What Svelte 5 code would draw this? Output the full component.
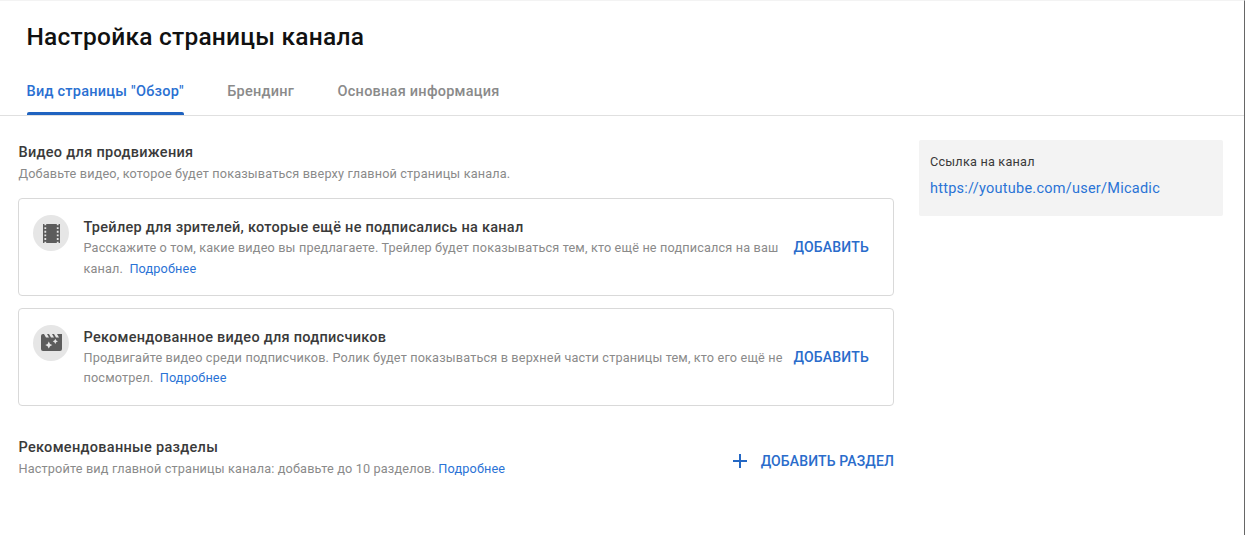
<script>
  const cards = [
    { icon: 'film', title: 'Трейлер для зрителей, которые ещё не подписались на канал', lines: ['Расскажите о том, какие видео вы предлагаете. Трейлер будет показываться тем, кто ещё не подписался на ваш', 'канал.'] },
    { icon: 'clap', title: 'Рекомендованное видео для подписчиков', lines: ['Продвигайте видео среди подписчиков. Ролик будет показываться в верхней части страницы тем, кто его ещё не', 'посмотрел.'] }
  ];
</script>

<div class="page">
  <h1>Настройка страницы канала</h1>
  <nav>
    <button class="tab active">Вид страницы "Обзор"</button>
    <button class="tab">Брендинг</button>
    <button class="tab">Основная информация</button>
  </nav>
  <div class="body">
    <main>
      <h2>Видео для продвижения</h2>
      <p class="sub first">Добавьте видео, которое будет показываться вверху главной страницы канала.</p>
      {#each cards as c}
        <section class="card">
          <span class="disc">
            {#if c.icon === 'film'}
              <svg width="17" height="19" viewBox="0 0 17 19"><path fill-rule="evenodd" d="M0 0h1.400v1.300h1.800V0h10.600v1.300h1.800V0H17v19h-1.400v-1.300h-1.800V19H3.200v-1.300H1.400V19H0zM1.400 3.200v1.900h1.800V3.200zM1.400 6.800v1.900h1.800V6.800zM1.400 10.400v1.900h1.800v-1.900zM1.400 14v1.900h1.800V14zM13.800 3.200v1.900h1.800V3.200zM13.800 6.800v1.900h1.800V6.800zM13.800 10.400v1.900h1.800v-1.900zM13.800 14v1.900h1.800V14z" /></svg>
            {:else}
              <svg width="21" height="17" viewBox="0 0 21 17"><path fill-rule="evenodd" d="M2 0h1l2 3.500h3L6 0h2l2 3.500h3L11 0h2l2 3.500h3L16 0h5v15a2 2 0 0 1-2 2H2a2 2 0 0 1-2-2V2a2 2 0 0 1 2-2zM7.800 7.600l1.200 2.300 2.300 1.200-2.300 1.200-1.200 2.300-1.200-2.300-2.300-1.200 2.300-1.200zM14.300 4.700l.9 1.700 1.700.9-1.700.9-.9 1.700-.9-1.700-1.700-.9 1.700-.9z" /></svg>
            {/if}
          </span>
          <div class="text">
            <h3>{c.title}</h3>
            <p>{c.lines[0]}<br />{c.lines[1]} <a href="#more">Подробнее</a></p>
          </div>
          <button class="action">ДОБАВИТЬ</button>
        </section>
      {/each}
      <div class="sections">
        <div>
          <h2>Рекомендованные разделы</h2>
          <p class="sub">Настройте вид главной страницы канала: добавьте до 10 разделов. <a href="#more">Подробнее</a></p>
        </div>
        <button class="action add"><svg viewBox="0 0 14 14"><path d="M7 0v14M0 7h14" /></svg>ДОБАВИТЬ РАЗДЕЛ</button>
      </div>
    </main>
    <aside>
      <p>Ссылка на канал</p>
      <a href="#channel">https://youtube.com/user/Micadic</a>
    </aside>
  </div>
</div>

<style>
  .page { box-sizing: border-box; height: 535px; overflow: hidden; background: #fff; border-right: 1px solid #666; border-top: 1px solid #f3f3f3; font-family: Roboto, sans-serif; color: #3a3a3a; }
  h1, h2, h3, p { margin: 0; white-space: nowrap; }
  button { border: 0; background: none; padding: 0; font-family: inherit; white-space: nowrap; }
  a { color: #2a73d6; text-decoration: none; }
  h1 { font-size: 24.500px; font-weight: 500; letter-spacing: .24px; line-height: 32px; padding: 20px 0 0 26.500px; color: #111; }
  nav { display: flex; gap: 43.500px; height: 48px; margin-top: 15px; padding-left: 26.500px; border-bottom: 1px solid #e0e0e0; box-sizing: border-box; }
  .tab { height: 47px; padding-top: 3px; font-size: 14.500px; font-weight: 500; letter-spacing: .25px; color: #8a8a8a; border-bottom: 3px solid transparent; }
  .tab.active { position: relative; color: #2a70d2; }
  .tab.active::after { content: ''; position: absolute; left: 0; right: 0; bottom: -3px; height: 3px; background: #1f63c0; border-radius: 2px 2px 0 0; }
  .body { display: flex; gap: 24.500px; padding: 24px 0 0 18px; align-items: flex-start; }
  main { width: 876px; padding-top: 2px; }
  h2 { font-size: 14.500px; font-weight: 500; letter-spacing: .3px; line-height: 21px; padding-left: .5px; }
  .sub { font-size: 12.700px; letter-spacing: .155px; line-height: 21px; color: #8a8a8a; padding-left: .5px; }
  .first { margin-bottom: 14px; }
  .card { display: flex; box-sizing: border-box; height: 98px; margin-bottom: 12px; padding: 16px 24px 0 14px; border: 1px solid #d9d9d9; border-radius: 4px; }
  .card + .card { margin-top: -.5px; }
  .disc { width: 36px; height: 36px; flex: none; border-radius: 50%; background: #e6e6e6; display: flex; align-items: center; justify-content: center; margin: 0 14.200px 0 .3px; }
  .disc svg { fill: #5c5c5c; }
  .text { flex: 1; min-width: 0; }
  h3 { font-size: 14.500px; font-weight: 500; letter-spacing: .27px; line-height: 23px; padding-top: 1px; }
  .text p { font-size: 12.700px; letter-spacing: .155px; line-height: 20.500px; margin-top: -1px; color: #8a8a8a; }
  .text a { margin-left: 3px; }
  .action { color: #2a6ccb; font-size: 14px; font-weight: 500; letter-spacing: .2px; height: 64px; }
  .sections { display: flex; justify-content: space-between; margin-top: 31.500px; }
  .add { height: 48px; display: flex; align-items: center; gap: 14px; letter-spacing: .13px; }
  .add svg { width: 14px; height: 14px; fill: none; stroke: #2468c4; stroke-width: 2; }
  aside { box-sizing: border-box; width: 304px; height: 75.500px; background: #f3f3f3; border-radius: 2px; padding: 11px 11.500px; font-size: 12.700px; letter-spacing: .2px; line-height: 21px; }
  aside a { display: block; margin-top: 6px; font-size: 14.500px; letter-spacing: .25px; }
</style>
